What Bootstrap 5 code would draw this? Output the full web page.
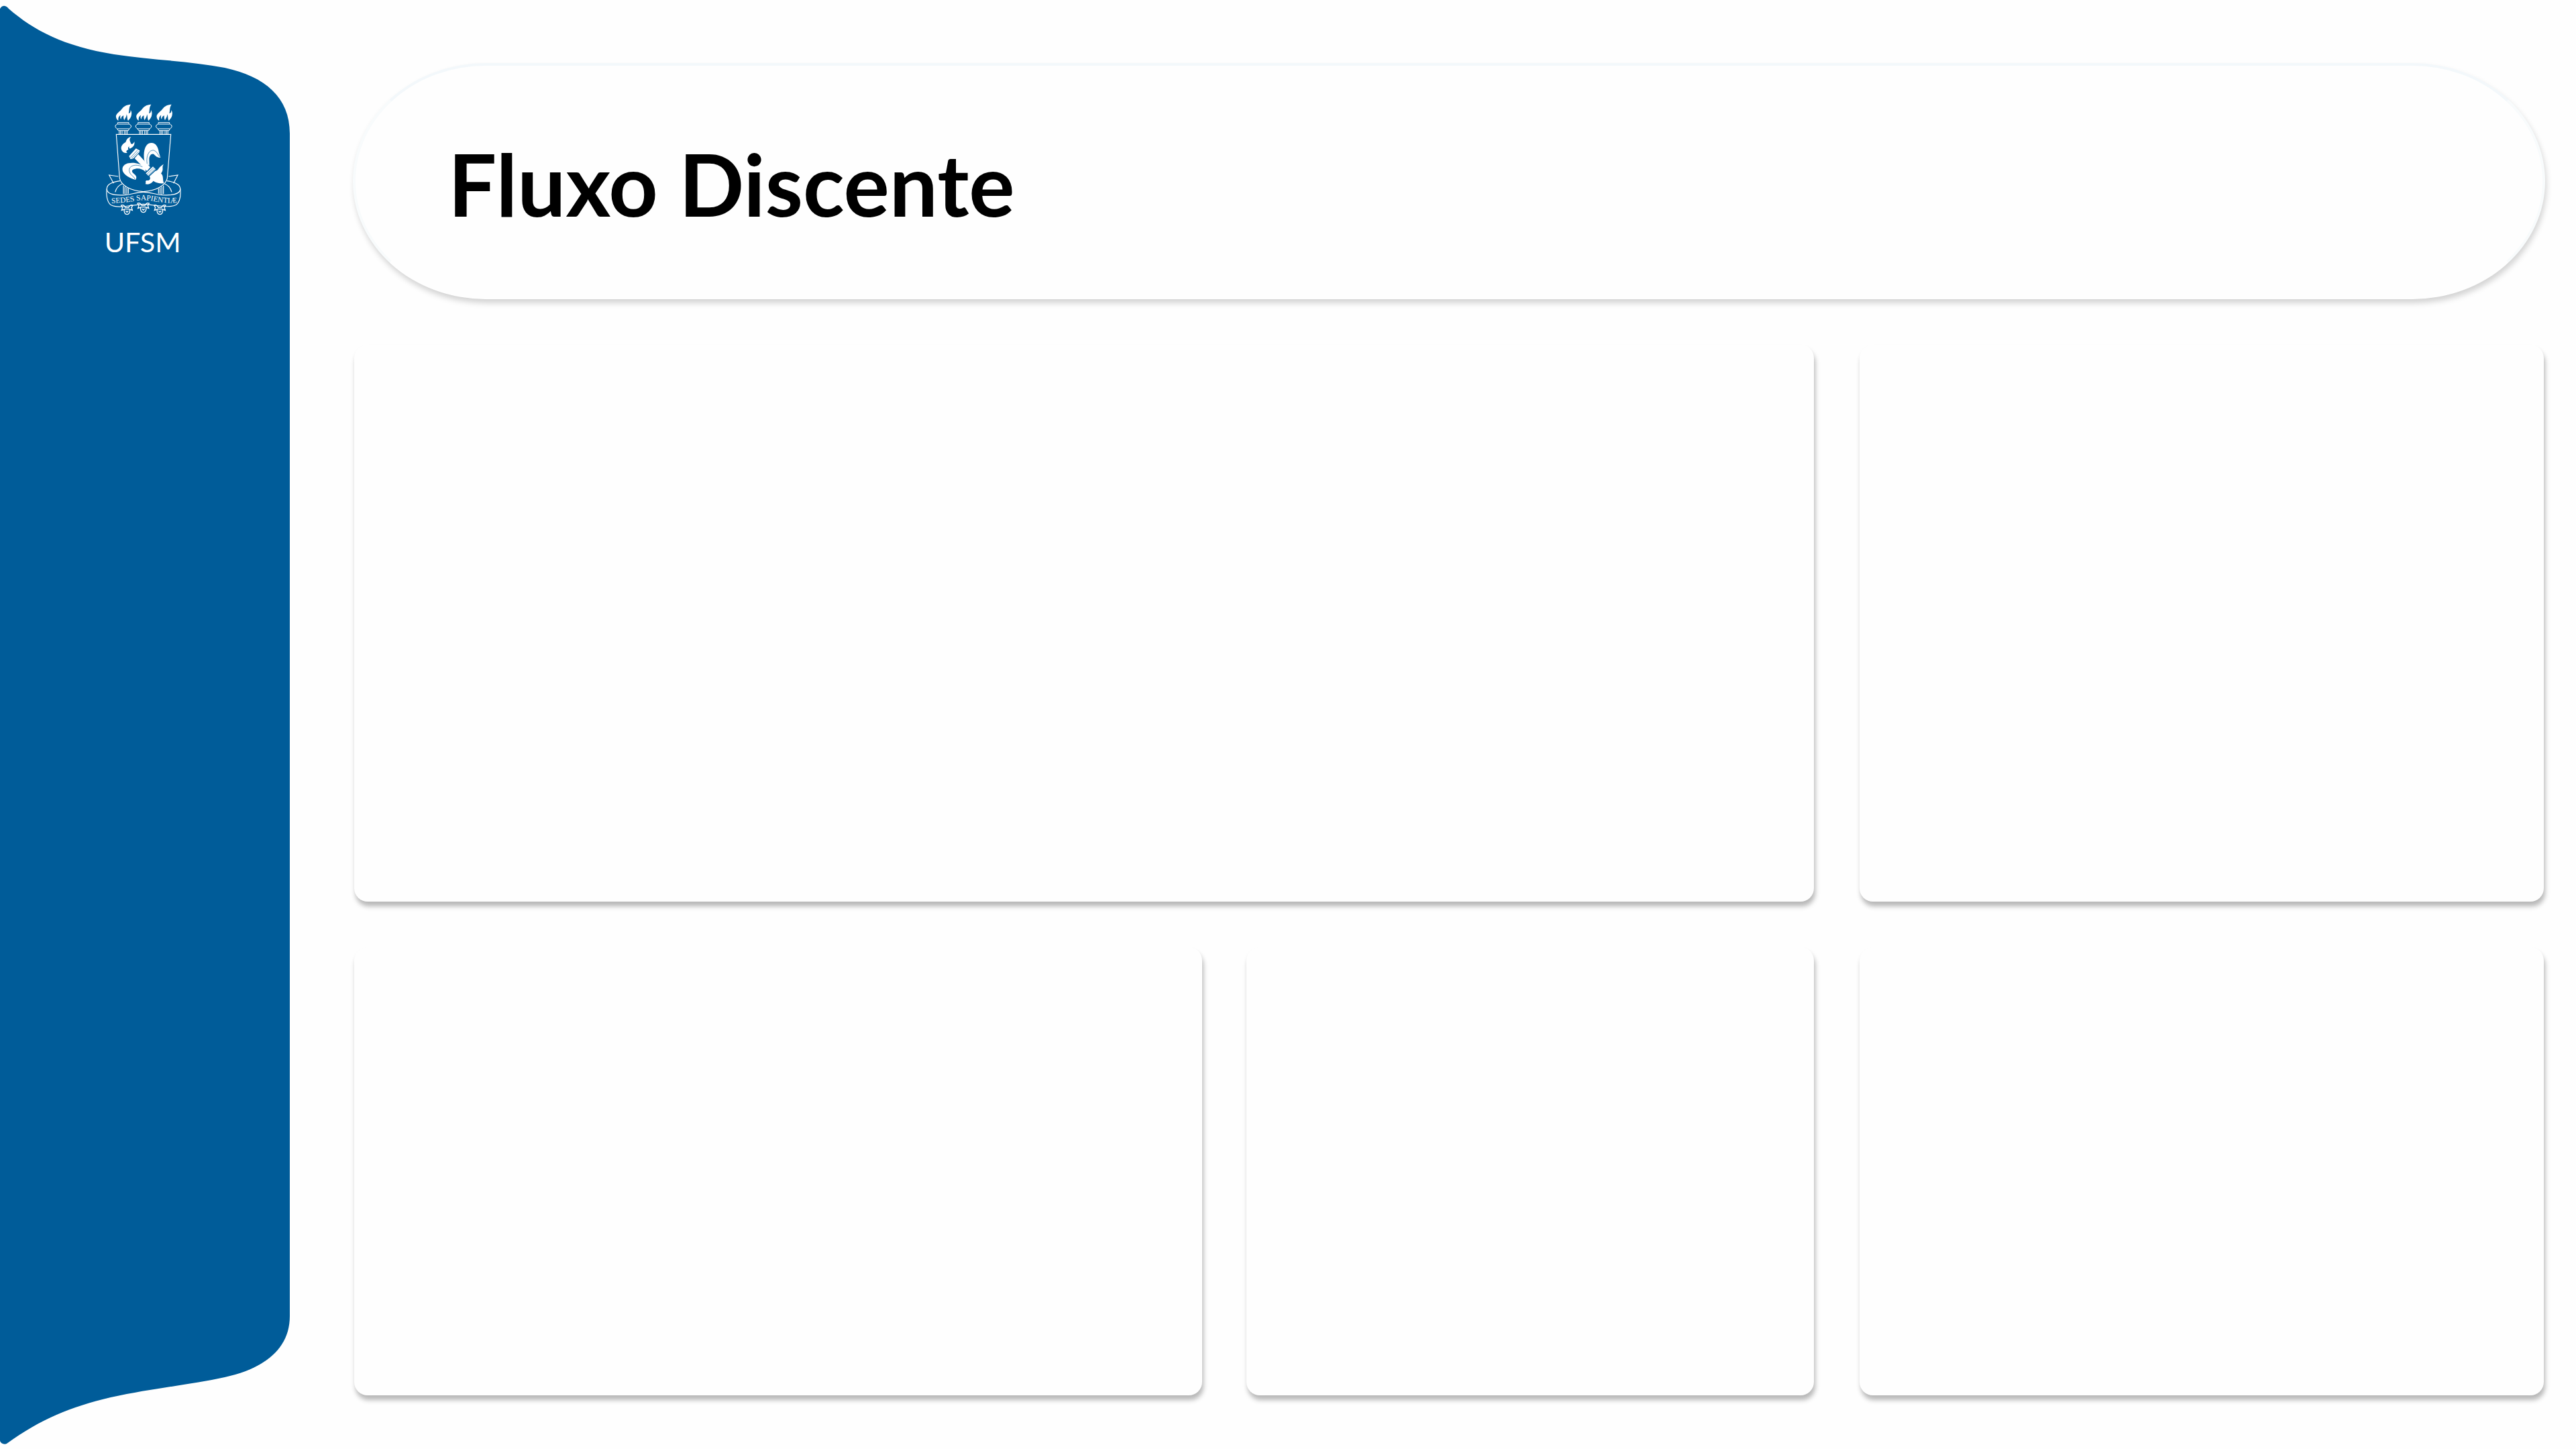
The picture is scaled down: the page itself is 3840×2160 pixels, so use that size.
<!DOCTYPE html>
<html lang="pt-BR">
<head>
<meta charset="utf-8">
<meta name="viewport" content="width=device-width, initial-scale=1">
<title>Fluxo Discente</title>
<link href="https://cdn.jsdelivr.net/npm/bootstrap@5.3.0/dist/css/bootstrap.min.css" rel="stylesheet">
<style>
  body { background: #fefefe; font-family: Lato, "Open Sans", sans-serif; }
  .side { flex: 0 0 432px; }
  .side-shape { z-index: 0; }
  .crest { width: 150px; height: 250px; margin: 140px 0 0 140px; z-index: 1; }
  .board { padding: 94px 46px 80px 94px; gap: 68px; }
  .title-bar { height: 352px; padding: 8px 138px 0; border: 4px solid; border-color: #f3f8fb #f8fbfc #fefefe; border-radius: 198px / 176px; background: #fefefe; box-shadow: 2px 6px 8px rgba(0, 0, 0, .17); }
  .title-bar h1 { font-size: 128px; font-weight: 700; line-height: 144px; color: #000; }
  .panels { gap: 68px; padding: 0 2px; }
  .panel { border: 0; border-radius: 20px; background: #fefefe; box-shadow: 2px 7px 7px rgba(0, 0, 0, .28); }
  .tall { flex: 830 1 0; }
  .short { flex: 668 1 0; }
  .w-a { flex: 2176 1 0; }
  .w-b { flex: 1264 1 0; }
  .w-c { flex: 846 1 0; }
  .w-d { flex: 0 1 1020px; }
  .pair { gap: 66px; }
</style>
<script src="https://cdn.jsdelivr.net/npm/bootstrap@5.3.0/dist/js/bootstrap.bundle.min.js" defer></script>
</head>
<body>
<div class="d-flex min-vh-100">
  <aside class="side position-relative">
    <svg class="side-shape position-absolute top-0 start-0 w-100 h-100" viewBox="0 0 432 2160" preserveAspectRatio="none" aria-hidden="true">
      <path fill="#005c99" d="M0 13C3 8 8 7 13 13C50 45 95 69 170 81C230 90 285 91 335 101C395 114 432 145 432 199V1962C432 2010 395 2040 335 2053C285 2064 230 2069 165 2083C105 2097 60 2116 10 2152C6 2154 0 2151 0 2147Z"/>
    </svg>
    <svg class="crest position-relative d-block" viewBox="0 0 450 750" role="img" aria-label="UFSM">
      <defs>
        <g id="column">
          <path fill="#fff" d="M165 47C145 48 132 56 123 70C113 82 96 90 99 104C100 112 106 118 110 119C107 108 112 98 119 95C116 103 118 110 121 113C122 103 127 98 133 97C131 105 133 112 136 118C139 108 147 102 146 91C151 100 147 112 153 120C160 112 168 102 168 92C170 84 167 77 164 72C165 82 160 88 155 86C159 76 155 60 165 47Z"/>
          <g fill="none" stroke="#fff" stroke-width="3">
            <path d="M106 134V128H156V134M104 135H158L166 141V149L158 156H104L96 149V141ZM104 156L109 164H154L158 156M113 164V180M149 164V180M119 164V180M126 164V180M136 164V180M143 164V180"/>
          </g>
        </g>
        <g id="bud">
          <path d="M-26 -22C-14 -27 -10 -18 -7 -12H7C10 -18 14 -27 26 -22L20 -12L24 0L12 -4C15 10 8 19 0 19C-8 19 -15 10 -12 -4L-24 0L-20 -12ZM-10 -5H10M-6 3L0 9L6 3"/>
        </g>
        <path id="motto" d="M79 489C110 487 145 486 180 479C215 473 235 473 270 480C305 487 335 489 375 486"/>
      </defs>
      <use href="#column"/>
      <use href="#column" x="91"/>
      <use href="#column" x="182"/>
      <g fill="none" stroke="#fff" stroke-width="3.5">
        <path d="M100 181H344L328 377C322 405 288 431 221 437C155 431 120 405 115 377Z"/>
        <path d="M109 369L68 363L88 400M334 369L375 363L356 400"/>
        <path d="M117 389C78 394 55 404 58 428C61 452 105 454 140 452C172 449 190 439 221 439C252 439 272 449 305 452C345 454 383 451 386 428C388 404 365 394 326 389"/>
        <path d="M58 424C54 450 58 482 75 496C105 515 165 497 221 493C278 497 338 512 368 496C385 482 389 452 386 424"/>
        <path d="M95 439C100 422 113 407 127 402M348 439C343 422 330 407 316 402M132 410V448M139 415V449M147 419V448M154 422V446M311 410V448M304 415V449M296 419V448M289 422V446"/>
        <g stroke-width="4">
          <use href="#bud" x="148" y="520"/>
          <use href="#bud" x="221" y="511"/>
          <use href="#bud" x="295" y="520"/>
        </g>
      </g>
      <g transform="translate(78 180)">
        <g fill="#fff">
          <path d="M88 13C72 15 68 25 64 36C52 42 43 52 44 65C47 78 57 86 72 84C64 79 67 72 76 69C73 61 76 57 80 55C78 64 81 68 90 61C101 55 105 43 103 33C99 43 91 48 87 41C84 31 77 24 88 13Z"/>
          <path d="M79 98L110 64L127 73L124 82L98 109L86 112Z"/>
          <path d="M104 108L120 89L174 148L159 165Z"/>
          <path d="M146 109C143 70 154 39 178 39C202 39 210 62 213 83L220 105C206 105 199 99 190 90C178 85 170 97 169 110L170 140C154 134 147 122 146 109Z"/>
          <path d="M152 150C130 130 100 125 76 130C54 135 46 150 51 166C58 182 80 197 108 204C115 195 112 185 103 179C87 168 90 158 107 155C125 152 140 156 153 169Z"/>
          <path d="M154 175L186 145L198 157L166 187Z"/>
          <path d="M171 188L197 164C211 164 209 147 234 134C223 151 237 155 222 176C235 186 228 201 235 220C214 221 201 218 188 209C178 222 164 227 152 223C157 216 149 211 157 207C169 209 178 203 171 188Z"/>
        </g>
        <g fill="none" stroke="#005c99" stroke-width="2">
          <path d="M85 105L117 71M91 108L122 77M160 132C154 98 168 69 190 72C205 77 208 94 218 103M139 146C108 130 76 142 80 164C84 185 98 184 106 201M158 180L190 150M164 185L194 156"/>
        </g>
      </g>
      <text fill="#fff" font-family="Liberation Serif, serif" font-size="34"><textPath href="#motto">SEDES SAPIENTIÆ</textPath></text>
      <text x="47" y="707" fill="#fff" font-family="Lato, sans-serif" font-size="124">UFSM</text>
    </svg>
  </aside>
  <main class="board d-flex flex-column flex-grow-1">
    <header class="title-bar d-flex align-items-center">
      <h1 class="m-0">Fluxo Discente</h1>
    </header>
    <section class="panels tall d-flex">
      <div class="card panel w-a"></div>
      <div class="card panel w-d"></div>
    </section>
    <section class="panels short d-flex">
      <div class="pair w-a d-flex">
        <div class="card panel w-b"></div>
        <div class="card panel w-c"></div>
      </div>
      <div class="card panel w-d"></div>
    </section>
  </main>
</div>
</body>
</html>
